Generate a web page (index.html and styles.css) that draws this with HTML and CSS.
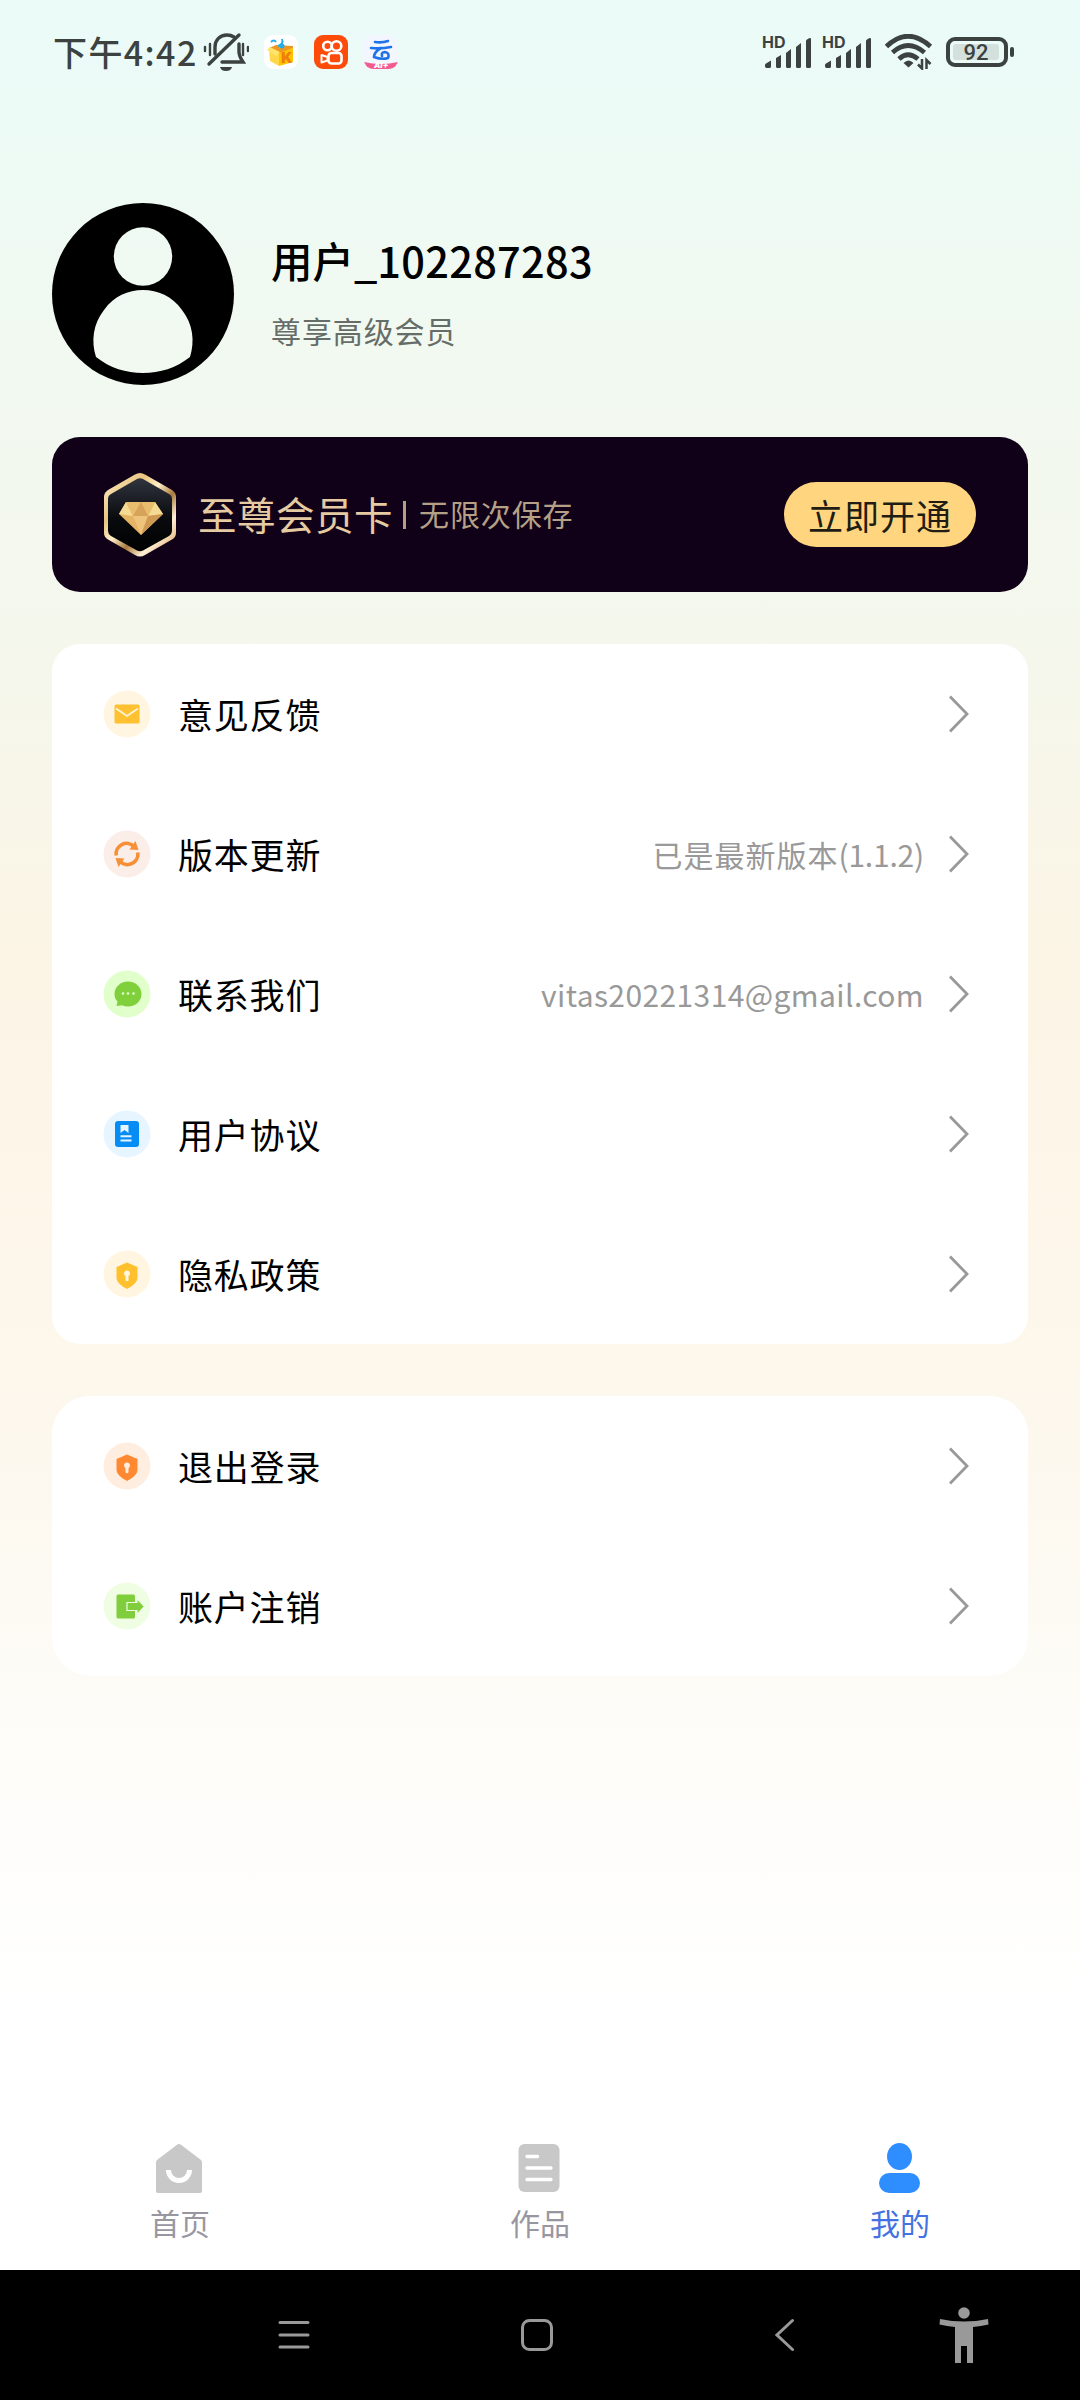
FILE: index.html
```html
<!DOCTYPE html>
<html lang="zh-CN">
<head>
<meta charset="utf-8">
<title>我的</title>
<link rel="stylesheet" href="styles.css">
</head>
<body>
<div class="screen">
  <header class="status">
    <span class="clock">下午4:42</span>
    <svg class="bell" width="46" height="40" viewBox="0 0 46 40" fill="none" stroke="#3b423f" stroke-width="3.4" stroke-linecap="round">
      <path d="M12 22V15C12 8 17 3 24 3c3 0 5 .7 7 2"/>
      <path d="M6 32 36 3"/>
      <path d="M36 12v8c0 4 2 7 4 10H19"/>
      <path d="M17 35h12c-1 3-3 4-6 4s-5-1-6-4z" fill="#3b423f" stroke="none"/>
      <path d="M2 15v4M7 12v11M40 12v11M45 15v4" stroke-width="2.4"/>
    </svg>
    <div class="apps">
      <svg width="34" height="34" viewBox="0 0 34 34">
        <rect width="34" height="34" rx="9" fill="#fff"/>
        <path d="M5 13 15 17v14L6 26z" fill="#ffd84a"/>
        <path d="M15 17 29 13v14l-14 4z" fill="#ffc400"/>
        <path d="M5 13 12 10l17 1v2l-14 5z" fill="#ee9721"/>
        <path d="M3 15 6 12l10 5-4 4z" fill="#ffe36a"/>
        <path d="M7 7q3-3 5 0M14 11q6-2 4-7" fill="none" stroke="#22aee8" stroke-width="2"/>
        <circle cx="18" cy="11" r="2.5" fill="#22aee8"/>
        <text x="17" y="28" class="mark-k">K</text>
      </svg>
      <svg width="34" height="34" viewBox="0 0 34 34" fill="none" stroke="#fff" stroke-width="2.6">
        <rect width="34" height="34" rx="9" fill="#fd4b0a" stroke="none"/>
        <circle cx="13.5" cy="11" r="4.3"/><circle cx="22.5" cy="11" r="4.8"/>
        <rect x="14.5" y="18" width="13" height="10.5" rx="3"/>
        <path d="M7.500 20v7.500l6-2v-3.500z" stroke-width="2" stroke-linejoin="round"/>
      </svg>
      <svg width="34" height="34" viewBox="0 0 34 34">
        <defs><clipPath id="cloud-clip"><rect width="34" height="34" rx="9"/></clipPath></defs>
        <g clip-path="url(#cloud-clip)">
          <rect width="34" height="34" fill="#f3f5ff"/>
          <path d="M0 27Q17 31 34 27v7H0z" fill="#f25b8f"/>
          <path d="M11 7q7 1 13-1M7 13q10 1 20-1M17 13q-7 4-7 9 8 3 14 1 2-5-3-6-4 0-3 4" fill="none" stroke="#1e73e8" stroke-width="2.600" stroke-linecap="round"/>
        </g>
        <text x="10" y="33" class="mark-ai">AI+</text>
      </svg>
    </div>
    <div class="system">
      <div class="signal">
        <span class="hd">HD</span>
        <svg width="52" height="34" viewBox="0 0 52 34" fill="#3b423f"><path d="M3 32v-3q0-1 1-1.500l5-3v6q0 1.500-1.500 1.500H4.500Q3 32 3 30zM14 22l5-3v11.500q0 1.500-1.500 1.500h-2Q14 32 14 30.500zM24 17l5-4v17.500q0 1.500-1.500 1.500h-2Q24 32 24 30.500zM34 11l5-4v23.500q0 1.500-1.500 1.500h-2Q34 32 34 30.500zM44 5q0-1 1-1.500l2-1.200q2-.8 2 1v27.200q0 1.500-1.500 1.500h-2Q44 32 44 30.500z"/></svg>
      </div>
      <div class="signal">
        <span class="hd">HD</span>
        <svg width="52" height="34" viewBox="0 0 52 34" fill="#3b423f"><path d="M3 32v-3q0-1 1-1.500l5-3v6q0 1.500-1.500 1.500H4.500Q3 32 3 30zM14 22l5-3v11.500q0 1.500-1.500 1.500h-2Q14 32 14 30.500zM24 17l5-4v17.500q0 1.500-1.500 1.500h-2Q24 32 24 30.500zM34 11l5-4v23.500q0 1.500-1.500 1.500h-2Q34 32 34 30.500zM44 5q0-1 1-1.500l2-1.200q2-.8 2 1v27.200q0 1.500-1.500 1.500h-2Q44 32 44 30.500z"/></svg>
      </div>
      <svg class="wifi" width="48" height="36" viewBox="0 0 48 36" fill="none" stroke="#3b423f" stroke-width="4.800">
        <path d="M1.500 12.500Q23 -8 45.500 12.500"/>
        <path d="M7.500 18.500Q23 4.500 39.500 18.500"/>
        <path d="M14 25Q23 16.500 33 25"/>
        <path d="M23.500 33.500 18.500 29q5-5 10 0z" fill="#3b423f" stroke="none"/>
        <path d="M37 25v9.500l-4-4M41.500 35v-9l4 4" stroke-width="2.500"/>
      </svg>
      <div class="battery"><span class="battery-level">92</span></div>
    </div>
  </header>

  <main class="content">
    <section class="profile">
      <svg class="avatar" width="182" height="182" viewBox="0 0 182 182">
        <defs><mask id="figure">
          <rect width="182" height="182" fill="#fff"/>
          <circle cx="91" cy="53.500" r="29.200"/>
          <path d="M44 154C39 138 41 121 52 107 62 93 76 87 91 87s29 6 39 20c11 14 13 31 8 47-14 11-30 16-47 16s-33-5-47-16z"/>
        </mask></defs>
        <circle cx="91" cy="91" r="91" mask="url(#figure)"/>
      </svg>
      <div class="identity">
        <h1 class="name">用户_<span class="uid">102287283</span></h1>
        <p class="tier">尊享高级会员</p>
      </div>
    </section>

    <section class="vip">
      <svg class="badge" width="74" height="84" viewBox="0 0 74 84">
        <defs>
          <linearGradient id="rim" x1="0" y1="0" x2="1" y2="1">
            <stop offset="0" stop-color="#fff1cf"/><stop offset=".3" stop-color="#e9c47f"/><stop offset=".45" stop-color="#fff0c8"/><stop offset=".6" stop-color="#a8793b"/><stop offset=".75" stop-color="#fff0d6"/><stop offset="1" stop-color="#d79a4f"/>
          </linearGradient>
          <linearGradient id="core" x1="0" y1="0" x2="0" y2="1">
            <stop offset="0" stop-color="#30343d"/><stop offset=".55" stop-color="#090b0e"/><stop offset="1" stop-color="#000"/>
          </linearGradient>
        </defs>
        <path d="M32 1.500q5-3 10 0L69 17q4 2.500 4 7v36q0 4-4 6.500L42 82q-5 3-10 0L5 66.500Q1 64 1 60V24q0-4.500 4-7z" fill="url(#rim)"/>
        <path d="M34 6q3-1.500 6 0l26 15q3 1.500 3 5v32q0 3-3 5L40 77.500q-3 1.500-6 0L8 63q-3-2-3-5V26q0-3.500 3-5z" fill="url(#core)"/>
        <path d="M23 29h29l8 12-22 21-22-21z" fill="#e4b363"/>
        <path d="M23 29 16 41l14 2zM52 29l8 12-15 2z" fill="#f6da94"/>
        <path d="m23 29 7 14 8-14zM52 29l-7 14-7-14z" fill="#e8bd6d"/>
        <path d="m30 43 8-14 7 14z" fill="#d6a35a"/>
        <path d="M30 43h15l-7 19z" fill="#eec47c"/>
        <path d="M45 43 60 41 38 62z" fill="#cf9a54"/>
      </svg>
      <span class="vip-title">至尊会员卡</span>
      <span class="vip-rule"></span>
      <span class="vip-note">无限次保存</span>
      <button class="vip-button" type="button">立即开通</button>
    </section>

    <nav class="panel">
      <a class="row">
        <svg class="icon" viewBox="0 0 48 48"><circle cx="24" cy="24" r="23.500" fill="#fff5e0"/><rect x="11.500" y="14.500" width="25" height="19" rx="1.500" fill="#ffc132"/><path d="m13 18.500 11 7.500 11-7.500" fill="none" stroke="#fff5d6" stroke-width="1.800"/></svg>
        <span class="label">意见反馈</span>
        <svg class="chevron" viewBox="0 0 20 38"><path d="m1 1.500 17 17.500L1 36.500"/></svg>
      </a>
      <a class="row">
        <svg class="icon" viewBox="0 0 48 48"><circle cx="24" cy="24" r="23.500" fill="#fbeee8"/><g fill="none" stroke="#f68f35" stroke-width="3.600"><path d="M13.200 25.500A10.500 10.500 0 0 1 31 16.500"/><path d="M34.800 22.500A10.500 10.500 0 0 1 17 31.500"/></g><path d="m32.500 11 3 9-9-.5zM15.500 37l-3-9 9 .5z" fill="#f68f35"/></svg>
        <span class="label">版本更新</span>
        <span class="value version">已是最新版本<span class="number">(1.1.2)</span></span>
        <svg class="chevron" viewBox="0 0 20 38"><path d="m1 1.500 17 17.500L1 36.500"/></svg>
      </a>
      <a class="row">
        <svg class="icon" viewBox="0 0 48 48"><circle cx="24" cy="24" r="23.500" fill="#e0ffcb"/><path d="M25 11.500c7.500 0 13.500 5.500 13.500 12.500S32.500 36.500 25 36.500c-2 0-4-.5-6-1.300L13.500 36l1-4.500C12.500 29.500 11.500 27 11.500 24c0-7 6-12.500 13.500-12.500z" fill="#7fd03b"/><g fill="#e0ffcb"><circle cx="20" cy="23.500" r="1.300"/><circle cx="25" cy="23.500" r="1.300"/><circle cx="30.500" cy="23.500" r="1.300"/></g></svg>
        <span class="label">联系我们</span>
        <span class="value email">vitas20221314@gmail.com</span>
        <svg class="chevron" viewBox="0 0 20 38"><path d="m1 1.500 17 17.500L1 36.500"/></svg>
      </a>
      <a class="row">
        <svg class="icon" viewBox="0 0 48 48"><circle cx="24" cy="24" r="23.500" fill="#e6f5ff"/><rect x="12" y="11" width="24" height="26" rx="3" fill="#068cf5"/><path d="M17.500 15h8v8l-4-3-4 3zM17.500 25.200h11v2h-11zM17.500 29.600h11v2h-11z" fill="#e6f5ff"/></svg>
        <span class="label">用户协议</span>
        <svg class="chevron" viewBox="0 0 20 38"><path d="m1 1.500 17 17.500L1 36.500"/></svg>
      </a>
      <a class="row">
        <svg class="icon" viewBox="0 0 48 48"><circle cx="24" cy="24" r="23.500" fill="#fff5e0"/><path d="M24 12.500 34.500 17v10.500c0 5-5 8.500-10.500 11.500-5.500-3-10.500-6.500-10.500-11.500V17z" fill="#ffc02e"/><path d="M22.500 30.500V26a3 3 0 1 1 3 0v4.500q-1.500 1.500-3 0z" fill="#fff5e0"/></svg>
        <span class="label">隐私政策</span>
        <svg class="chevron" viewBox="0 0 20 38"><path d="m1 1.500 17 17.500L1 36.500"/></svg>
      </a>
    </nav>

    <nav class="panel panel-account">
      <a class="row">
        <svg class="icon" viewBox="0 0 48 48"><circle cx="24" cy="24" r="23.500" fill="#ffeee0"/><path d="M24 12.500 34.500 17v10.500c0 5-5 8.500-10.500 11.500-5.500-3-10.500-6.500-10.500-11.500V17z" fill="#ff8930"/><path d="M22.500 30.500V26a3 3 0 1 1 3 0v4.500q-1.500 1.500-3 0z" fill="#ffeee0"/></svg>
        <span class="label">退出登录</span>
        <svg class="chevron" viewBox="0 0 20 38"><path d="m1 1.500 17 17.500L1 36.500"/></svg>
      </a>
      <a class="row">
        <svg class="icon" viewBox="0 0 48 48"><circle cx="24" cy="24" r="23.500" fill="#effee3"/><rect x="13.500" y="12.500" width="18.500" height="24" rx="1.500" fill="#80ce3d"/><path d="M24 20.500h10v-4l7.500 8-7.500 8v-4H24z" fill="#80ce3d" stroke="#effee3" stroke-width="1.200"/></svg>
        <span class="label">账户注销</span>
        <svg class="chevron" viewBox="0 0 20 38"><path d="m1 1.500 17 17.500L1 36.500"/></svg>
      </a>
    </nav>
  </main>

  <nav class="tabs">
    <a class="tab">
      <svg width="52" height="52" viewBox="1 0 52 52"><path d="M24 1.800q2-1.500 4 0L48 17q1 1 1 2.500V48q0 2-2 2H5q-2 0-2-2V19.500Q3 18 4 17z" fill="#c8c8c8"/><path d="M15.500 27a10.500 10.500 0 0 0 21 0" fill="none" stroke="#fff" stroke-width="5"/></svg>
      <span>首页</span>
    </a>
    <a class="tab">
      <svg width="52" height="52" viewBox="1 0 52 52"><rect x="5.500" y="1" width="41" height="48" rx="6" fill="#c8c8c8"/><path d="M14 13.500h10.500M14 25h24M14 36.500h24" stroke="#fff" stroke-width="3.400" stroke-linecap="round"/></svg>
      <span>作品</span>
    </a>
    <a class="tab tab-active">
      <svg width="52" height="52" viewBox="0 0 52 52" fill="#2f8eff"><ellipse cx="25.500" cy="13.500" rx="12.500" ry="13.500"/><rect x="5" y="30" width="41" height="20" rx="10"/></svg>
      <span>我的</span>
    </a>
  </nav>

  <footer class="navbar">
    <svg width="32" height="32" viewBox="0 0 32 32" fill="none" stroke="#999" stroke-width="3" stroke-linecap="round"><path d="M2 3.500h28M2 16h28M2 28h28"/></svg>
    <svg width="34" height="34" viewBox="0 0 34 34" fill="none" stroke="#999" stroke-width="3"><rect x="2.500" y="2.500" width="29" height="29" rx="7"/></svg>
    <svg width="20" height="34" viewBox="0 0 20 34" fill="none" stroke="#999" stroke-width="3" stroke-linecap="round"><path d="M17.500 2.500 2 17l15.500 14.500"/></svg>
    <svg width="50" height="58" viewBox="0 0 50 58" fill="#999"><circle cx="25" cy="7" r="5.800"/><path d="M1 13q24 5 48 0l.5 5.500Q42 20 34 21v36h-6V40h-6v17h-6V21Q8 20 .5 18.500z"/></svg>
  </footer>
</div>
</body>
</html>
```
FILE: styles.css
```css
* { box-sizing: border-box; }

body {
  margin: 0;
  font-family: "Noto Sans CJK SC", sans-serif;
  color: #000;
}

svg { display: block; flex: none; }

.screen {
  width: 1080px;
  height: 2400px;
  display: flex;
  flex-direction: column;
  background: linear-gradient(180deg, #eafbf8 0, #f1f9f1 330px, #f5f7ec 660px, #fbf5e6 920px, #fdf5e7 1100px, #fdf8ee 1450px, #fdfcf8 1720px, #fff 2020px);
}

/* Status bar */
.status {
  height: 104px;
  padding: 0 72px 0 53px;
  display: flex;
  align-items: center;
  color: #3b423f;
}

.clock {
  width: 150px;
  font-size: 34px;
  font-weight: 500;
  line-height: 40px;
  letter-spacing: 1.4px;
  white-space: nowrap;
}

.apps { display: flex; gap: 16px; margin-left: 15px; }

.mark-k { font: 900 15px "Inter", sans-serif; fill: #ef7d10; }
.mark-ai { font: italic 900 8px "Inter", sans-serif; fill: #fff; }

.system {
  display: flex;
  align-items: center;
  gap: 8px;
  margin-left: auto;
}

.signal { position: relative; margin-top: 2px; }

.hd {
  position: absolute;
  left: 0;
  top: -4px;
  font: 700 16px/20px "Inter", sans-serif;
}

.wifi { margin-left: 3px; }

.battery {
  position: relative;
  width: 62px;
  height: 30px;
  margin-left: 5px;
  padding: 3px;
  border: 4px solid #3b423f;
  border-radius: 9px;
}

.battery::after {
  content: "";
  position: absolute;
  right: -10px;
  top: 6px;
  width: 4px;
  height: 10px;
  border-radius: 2px;
  background: #3b423f;
}

.battery-level {
  display: block;
  width: 46px;
  height: 16px;
  border-radius: 3px;
  background: #d4e0dc;
  font: 500 22px/17px Roboto, sans-serif;
  text-align: center;
}

/* Page content */
.content {
  flex: 1;
  display: flex;
  flex-direction: column;
  padding: 99px 52px 0;
}

.profile { display: flex; gap: 37px; height: 182px; }
.identity { padding-top: 29px; }

.name {
  margin: 0;
  font-size: 41.500px;
  font-weight: 500;
  line-height: 56px;
  white-space: nowrap;
}

.uid { letter-spacing: 0.3px; }

.tier {
  margin: 20px 0 0;
  font-size: 30px;
  line-height: 44px;
  letter-spacing: 0.9px;
  color: #666d68;
}

.vip {
  height: 155px;
  margin-top: 52px;
  padding: 0 52px 0 51px;
  display: flex;
  align-items: center;
  border-radius: 28px;
  background: #100118;
}

.vip-title {
  margin: -3px 0 0 21px;
  font-size: 38.500px;
  letter-spacing: 0.5px;
  color: #e6caa2;
}

.vip-rule { width: 3px; height: 28px; margin: 0 13px 0 10px; background: #b5a086; }

.vip-note { margin-top: -3px; font-size: 30px; letter-spacing: 0.9px; color: #b5a086; }

.vip-button {
  width: 192px;
  height: 65px;
  margin-left: auto;
  padding: 0;
  border: 0;
  border-radius: 33px;
  background: #ffd580;
  color: #211d12;
  font: 400 35px/63px "Noto Sans CJK SC", sans-serif;
  letter-spacing: 1px;
}

.panel {
  margin-top: 52px;
  border-radius: 28px;
  background: #fff;
}

.panel-account { border-radius: 38px; }

.row {
  height: 140px;
  padding: 0 59px 0 51px;
  display: flex;
  align-items: center;
}

.icon { width: 48px; height: 48px; }

.label {
  margin: -1px 0 0 27px;
  font-size: 35px;
  line-height: 50px;
  letter-spacing: 0.8px;
}

.value {
  margin: -1px 0 0 auto;
  color: #999;
  font-size: 30px;
  line-height: 44px;
  white-space: nowrap;
}

.version { letter-spacing: 1px; }
.number { letter-spacing: -0.2px; }
.email { letter-spacing: 0.4px; }

.chevron {
  width: 20px;
  height: 38px;
  margin-left: auto;
  fill: none;
  stroke: #999;
  stroke-width: 2.800;
}

.value + .chevron { margin-left: 25px; }

/* App tabs */
.tabs {
  height: 150px;
  display: grid;
  grid-template-columns: repeat(3, 1fr);
  background: #fff;
}

.tab {
  padding-top: 23px;
  display: flex;
  flex-direction: column;
  align-items: center;
  gap: 5px;
  color: #9897a1;
  font-size: 30px;
  line-height: 44px;
}

.tab-active { color: #4472e0; }

/* System navigation */
.navbar {
  height: 130px;
  padding: 0 91px 0 278px;
  display: grid;
  grid-template-columns: 242px 255px 164px 50px;
  align-items: center;
  background: #000;
}
```
